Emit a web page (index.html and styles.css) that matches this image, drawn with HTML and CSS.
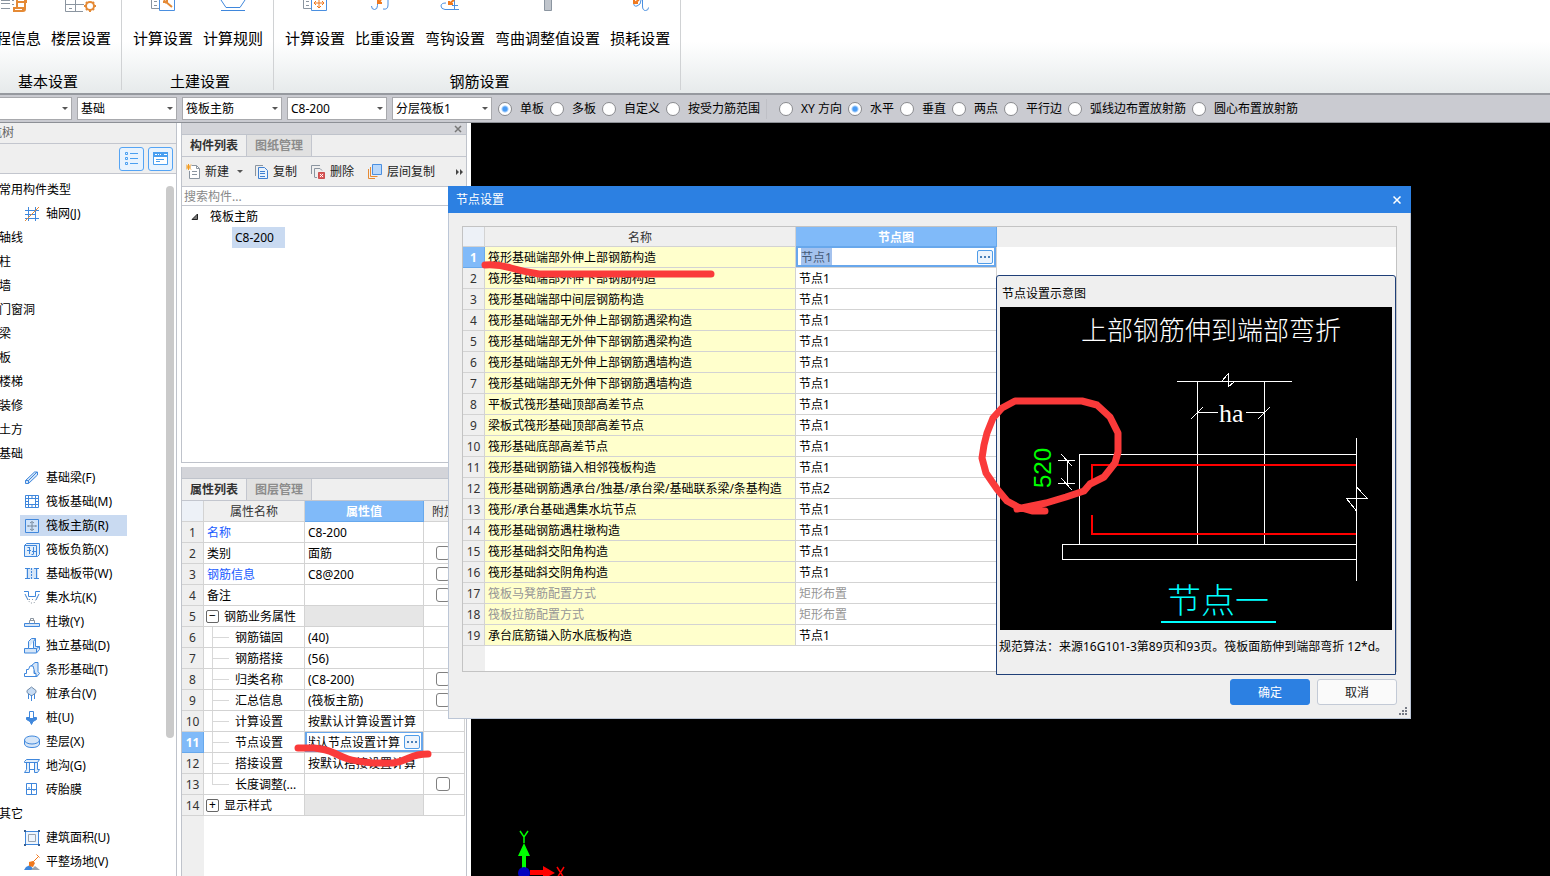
FILE: index.html
```html
<!DOCTYPE html>
<html lang="zh-CN">
<head>
<meta charset="utf-8">
<title>节点设置</title>
<link rel="stylesheet" href="styles.css">
</head>
<body>
<div class="app">
  <header class="ribbon">
    <section class="group group-basic">
      <div class="group-items">
        <button class="tool tool-first"><svg width="32" height="12" fill="none" stroke="#8b95a0"><path d="M4 .5h9M4 3.500h9M4 8.500h9M15 .5h2M15 4.500h2"/><path stroke="#e58a35" stroke-width="2" d="M20 0v7M28 0v9q0 2-2 2H17V8h9v3M20 2h9V0"/></svg><span>程信息</span></button>
        <button class="tool"><svg width="32" height="12" fill="none" stroke="#8b95a0"><path d="M.5 0v11.500H18M.5 4.500H19M10.500 0v11M4 8.500h3"/><circle cx="25" cy="6" r="4" stroke="#e58a35" stroke-width="2"/><path stroke="#e58a35" stroke-width="2" d="M19 6h2M29 6h2M25 10v2M21 2l1 1M28 9l1 1M21 10l1-1M28 3l1-1"/></svg><span>楼层设置</span></button>
      </div>
      <h2>基本设置</h2>
    </section>
    <section class="group">
      <div class="group-items">
        <button class="tool"><svg width="32" height="12" fill="none" stroke="#8b95a0"><path d="M4.500 0v8.500H12M7 1.500h3M7 5.500h3"/><path stroke="#4a8fe0" d="M12.500 0v10.500h15V0"/><path stroke="#e58a35" stroke-width="2" d="M17 0l2 3M19 2l6 5M16 2h4V0"/></svg><span>计算设置</span></button>
        <button class="tool"><svg width="32" height="12" fill="none" stroke="#3f87dc"><path d="M4 0l5 7.500h14L28 0M4 10.500h24"/></svg><span>计算规则</span></button>
      </div>
      <h2>土建设置</h2>
    </section>
    <section class="group">
      <div class="group-items">
        <button class="tool"><svg width="32" height="12" fill="none" stroke="#8b95a0"><path d="M4.500 0v8.500H12M7 1.500h3M7 5.500h3"/><path stroke="#4a8fe0" d="M12.500 0v10.500h15V0"/><path stroke="#f0791e" d="M20 0v8M15 3h10M18 6l2 2 2-2M17 1l-2 2 2 2M23 1l2 2-2 2"/></svg><span>计算设置</span></button>
        <button class="tool"><svg width="32" height="12" fill="none" stroke="#4a8fe0"><path d="M2.500 6q0 3.500 3 3.500t3-4V0M14 9q5 1 5-4V0"/><path stroke="#f0791e" stroke-width="2" d="M9 3l3-3M9 0v3h4"/></svg><span>比重设置</span></button>
        <button class="tool"><svg width="32" height="12" fill="none" stroke="#4a8fe0"><path d="M7 3q-5 0-5 3t4 3.500h14M15.500 0v9M13 5.500h6"/><path stroke="#f0791e" stroke-width="2" d="M10 4l5-4M10 1v3h4"/></svg><span>弯钩设置</span></button>
        <button class="tool"><svg width="32" height="12"><path fill="#c0c5cc" stroke="#8b95a0" d="M12.500-1h7v11.500h-7z"/></svg><span>弯曲调整值设置</span></button>
        <button class="tool"><svg width="32" height="12" fill="none" stroke="#4a8fe0"><path d="M10 2q-1 5 3 4t4-6M18.500 0v6q0 4.500 3 4.500t3-3"/><path stroke="#f0791e" stroke-width="2" d="M10 3l5-3M10 0v3h4"/></svg><span>损耗设置</span></button>
      </div>
      <h2>钢筋设置</h2>
    </section>
  </header>

  <div class="optionbar">
    <label class="combo combo-cut"><select aria-label="楼层"><option></option></select></label>
    <label class="combo"><select aria-label="构件大类"><option>基础</option></select></label>
    <label class="combo"><select aria-label="构件类型"><option>筏板主筋</option></select></label>
    <label class="combo"><select aria-label="构件名称"><option>C8-200</option></select></label>
    <label class="combo"><select aria-label="分层"><option>分层筏板1</option></select></label>
    <div class="radios">
      <label><input type="radio" name="range" checked>单板</label>
      <label><input type="radio" name="range">多板</label>
      <label><input type="radio" name="range">自定义</label>
      <label><input type="radio" name="range">按受力筋范围</label>
    </div>
    <div class="radios radios-dir">
      <label><input type="radio" name="dir">XY 方向</label>
      <label><input type="radio" name="dir" checked>水平</label>
      <label><input type="radio" name="dir">垂直</label>
      <label><input type="radio" name="dir">两点</label>
      <label><input type="radio" name="dir">平行边</label>
      <label><input type="radio" name="dir">弧线边布置放射筋</label>
      <label><input type="radio" name="dir">圆心布置放射筋</label>
    </div>
  </div>

  <main class="workspace">
    <aside class="nav">
      <h3 class="nav-title"><span>航树</span></h3>
      <div class="nav-tools">
        <button aria-label="列表"><svg width="16" height="16" fill="none" stroke="#4a9ff0"><path d="M1.500 1.500h2v2h-2zM1.500 6.500h2v2h-2zM1.500 11.500h2v2h-2zM6 2.500h8M6 7.500h8M6 12.500h8"/></svg></button>
        <button aria-label="面板"><svg width="16" height="16"><path fill="#fff" stroke="#4a9ff0" d="M.5 1.500h14v12H.5z"/><path fill="#4a9ff0" d="M0 1h15v5H0z"/><path stroke="#fff" d="M2 3.500h2M5 3.500h1M7 3.500h1M11 3.500h3"/><path stroke="#4a9ff0" d="M3 8.500h8M3 10.500h4"/></svg></button>
      </div>
      <div class="nav-scroll">
        <ul class="tree">
          <li>常用构件类型</li>
          <li class="leaf"><a href="#"><svg viewBox="0 0 16 16"><path d="M4.500 1v14M11.500 1v14M1 4.500h14M1 8.500h10M1 12.500h14"/><path stroke="#e58a35" d="M1 15L15 1"/></svg>轴网(J)</a></li>
          <li>轴线</li><li>柱</li><li>墙</li><li>门窗洞</li><li>梁</li><li>板</li><li>楼梯</li><li>装修</li><li>土方</li><li>基础</li>
          <li class="leaf"><a href="#"><svg viewBox="0 0 16 16"><path fill="#d6e6f8" d="M1.500 10.500l9-8.500h3v3l-9 8.500h-3zM1.500 10.500h3v3M4.500 10.500L13 2"/></svg>基础梁(F)</a></li>
          <li class="leaf"><a href="#"><svg viewBox="0 0 16 16"><path d="M1.500 1.500h13v12h-13zM4.500 1v13M11.500 1v13M1 4.500h14M1 10.500h14M8 1.500v3M8 10.500v3M1.500 7.500h3M11.500 7.500h3"/></svg>筏板基础(M)</a></li>
          <li class="leaf selected"><a href="#"><svg viewBox="0 0 16 16"><path fill="#cfe3fa" d="M1.500 1.500h13v13h-13z"/><path stroke="#77889b" d="M8 4v8M4 8h8M6 5l2-1.500L10 5M6 11l2 1.500 2-1.500M4 9V7M12 9V7"/></svg>筏板主筋(R)</a></li>
          <li class="leaf"><a href="#"><svg viewBox="0 0 16 16"><path fill="#e3effb" d="M.5 3.500l2-2h13v11l-2 2H.5zM.5 3.500h12v11"/><path d="M5.500 5v7M9.500 5v7M3 8.500h4M8 9.500h4M5.500 5.500h-2M9.500 12.500h-2"/></svg>筏板负筋(X)</a></li>
          <li class="leaf"><a href="#"><svg viewBox="0 0 16 16"><path fill="#d6e6f8" stroke="none" d="M2 2h12v11H2z"/><path d="M1 2.500h5M10 2.500h5M1 12.500h5M10 12.500h5M3.500 2.500v10M12.500 2.500v10"/><path stroke-dasharray="2 1" d="M7.500 2v11"/></svg>基础板带(W)</a></li>
          <li class="leaf"><a href="#"><svg viewBox="0 0 16 16"><path d="M0 1.500h4.500v5h7v-5H16M1 4l3 6M15 4l-3 6"/><path stroke="#8b95a0" stroke-dasharray="1 2" d="M2 6l4 7h4l4-7M5 9.500h6"/></svg>集水坑(K)</a></li>
          <li class="leaf"><a href="#"><svg viewBox="0 0 16 16"><path fill="#d6e6f8" d="M.5 9.500h15v3H.5z"/><path stroke="#8b95a0" d="M5.500 9.500v-3h5v3M6.500 6.500v-2h3v2"/></svg>柱墩(Y)</a></li>
          <li class="leaf"><a href="#"><svg viewBox="0 0 16 16"><path fill="#d6e6f8" d="M.5 10.500h4v-7l3-3h4v8h4v3l-3 3.500H.500zM4.500 10.500h5v-7l2-3M9.500 10.500h3v4M12.500 10.500l3-2"/></svg>独立基础(D)</a></li>
          <li class="leaf"><a href="#"><svg viewBox="0 0 16 16"><path fill="#d6e6f8" d="M7 4l4-3.500h3v9l1.500 2-3 3.500L9 6z"/><path fill="#fff" d="M.5 14.500v-3h2v-4h2L6 4h3l1 3.500v4h2v3z"/></svg>条形基础(T)</a></li>
          <li class="leaf"><a href="#"><svg viewBox="0 0 16 16"><path fill="#c7dcf4" stroke="#718ba8" d="M7.500 1L12 4.500v2L7.500 10 3 6.500v-2z"/><path d="M7.500 9v6M4.500 8v5M10.500 8v5"/></svg>桩承台(V)</a></li>
          <li class="leaf"><a href="#"><svg viewBox="0 0 16 16"><path fill="#fff" d="M5.500 1.500h4v7h-4z"/><path fill="#3f87dc" d="M2.500 7.500h3v2h4v-2h3v2L9 11.500l-1.500 3L6 11.500 2.500 9.500z"/></svg>桩(U)</a></li>
          <li class="leaf"><a href="#"><svg viewBox="0 0 16 16"><path fill="#d6e6f8" d="M.5 6v4q1 3.500 7.500 3.500t7.500-3.500V6"/><ellipse cx="8" cy="6" rx="7.500" ry="4" fill="#d6e6f8"/></svg>垫层(X)</a></li>
          <li class="leaf"><a href="#"><svg viewBox="0 0 16 16"><path fill="#e3effb" d="M.5 3.500l2-2h13l-2 3H.5zM2.500 4.500v7l-2 3h5v-10M10.500 4.500v10h3l2-3h-2v-7M5.500 11.500h5"/></svg>地沟(G)</a></li>
          <li class="leaf"><a href="#"><svg viewBox="0 0 16 16"><path d="M2.500 1.500h10v11h-10zM7.500 1.500v11M2.500 7.500h10M5 7V5M10 7v2"/></svg>砖胎膜</a></li>
          <li>其它</li>
          <li class="leaf"><a href="#"><svg viewBox="0 0 16 16"><path fill="#eef5fd" d="M1.500 1.500h13v13h-13z"/><path stroke="#99a3ae" d="M4.500 4.500h7v7h-7z"/><path fill="#385f91" stroke="none" d="M0 0h2v2H0zM14 0h2v2h-2zM0 14h2v2H0zM14 14h2v2h-2z"/></svg>建筑面积(U)</a></li>
          <li class="leaf"><a href="#"><svg viewBox="0 0 16 16"><path fill="#3f87dc" stroke="none" d="M0 16l2-3 4-2 4 5z"/><path fill="#99a3ae" stroke="none" d="M7 16l4-4 5 4z"/><path fill="#f0791e" stroke="none" d="M5 8l4-1 2 2-2 4-4-1z"/><path stroke="#f0791e" d="M9 8l5-5M12.500.500l3 3"/></svg>平整场地(V)</a></li>
        </ul>
        <div class="scrollbar"></div>
      </div>
    </aside>

    <div class="docks">
      <section class="dock dock-list">
        <div class="dock-bar"><button aria-label="关闭"><svg width="8" height="8" stroke="#777" stroke-width="1.500"><path d="M1 1l6 6M7 1L1 7"/></svg></button></div>
        <div class="tabs"><button class="active">构件列表</button><button>图纸管理</button></div>
        <div class="dock-tools">
          <button><svg width="15" height="16" fill="none" stroke="#8b95a0"><path fill="#fff" d="M5.500 1.500h5l3 3v10h-10V7"/><path d="M10.500 1.500v3h3M6 7.500h5M6 10.500h5"/><path stroke="#f29a1c" d="M0 .5l5 5M5 .5l-5 5M2.500 0v6M0 3h5"/></svg>新建<i class="caret"></i></button>
          <button class="b-copy"><svg width="14" height="16" fill="none" stroke="#8b95a0"><path d="M.5 12V1.500H8"/><path stroke="#3f7fd0" fill="#e8f2fd" d="M3.500 3.500h6l3 3v8h-9zM5 7.500h5M5 9.500h5M5 12.500h5"/></svg>复制</button>
          <button class="b-delete"><svg width="15" height="16" fill="none" stroke="#8b95a0"><path d="M.5 10V1.500H9M3.500 13V4.500H9l2 2M3.500 13.500H6"/><path fill="#dc5a5a" stroke="#c94f4f" d="M7.500 8.500h6v6h-6z"/><path stroke="#fff" d="M9 10l3 3M12 10l-3 3"/></svg>删除</button>
          <button class="b-floor"><svg width="15" height="16" fill="none" stroke="#e58a35"><path d="M.5 5v9.500H7M2.500 3v9.500h7" /><path fill="#b9d8fb" stroke="#4a8fe0" d="M4.500.500h9v10h-9z"/></svg>层间复制</button>
          <button class="b-more" aria-label="更多"><svg width="8" height="8" fill="#444"><path d="M0 1l3 3-3 3zM4 1l3 3-3 3z"/></svg></button>
        </div>
        <input class="search" type="text" placeholder="搜索构件..." aria-label="搜索构件">
        <div class="parts">
          <div class="part-root"><svg width="8" height="8"><path fill="#777" stroke="#222" d="M6.500 1v5.500H1z"/></svg>筏板主筋</div>
          <div class="part-item">C8-200</div>
        </div>
      </section>

      <section class="dock dock-props">
        <div class="dock-bar"></div>
        <div class="tabs"><button class="active">属性列表</button><button>图层管理</button></div>
        <div class="props">
        <table class="grid">
          <colgroup><col class="c-num"><col class="c-name"><col class="c-value"><col></colgroup>
          <thead><tr><th class="corner"></th><th>属性名称</th><th class="hot">属性值</th><th class="extra">附加</th></tr></thead>
          <tbody>
            <tr><th>1</th><td class="link">名称</td><td>C8-200</td><td></td></tr>
            <tr><th>2</th><td>类别</td><td>面筋</td><td class="check"><input type="checkbox" aria-label="类别附加"></td></tr>
            <tr><th>3</th><td class="link">钢筋信息</td><td>C8@200</td><td class="check"><input type="checkbox" aria-label="钢筋信息附加"></td></tr>
            <tr><th>4</th><td>备注</td><td></td><td class="check"><input type="checkbox" aria-label="备注附加"></td></tr>
            <tr><th>5</th><td><button class="fold">−</button>钢筋业务属性</td><td class="dim"></td><td></td></tr>
            <tr><th>6</th><td class="sub">钢筋锚固</td><td>(40)</td><td></td></tr>
            <tr><th>7</th><td class="sub">钢筋搭接</td><td>(56)</td><td></td></tr>
            <tr><th>8</th><td class="sub">归类名称</td><td>(C8-200)</td><td class="check"><input type="checkbox" aria-label="归类名称附加"></td></tr>
            <tr><th>9</th><td class="sub">汇总信息</td><td>(筏板主筋)</td><td class="check"><input type="checkbox" aria-label="汇总信息附加"></td></tr>
            <tr><th>10</th><td class="sub">计算设置</td><td>按默认计算设置计算</td><td></td></tr>
            <tr><th class="hot">11</th><td class="sub">节点设置</td><td class="edit"><div class="editor"><input class="scrolled" type="text" value="按默认节点设置计算" aria-label="节点设置"><button class="dots" aria-label="选择"><i></i></button></div></td><td></td></tr>
            <tr><th>12</th><td class="sub">搭接设置</td><td>按默认搭接设置计算</td><td></td></tr>
            <tr><th>13</th><td class="sub last">长度调整(...</td><td></td><td class="check"><input type="checkbox" aria-label="长度调整附加"></td></tr>
            <tr><th>14</th><td><button class="fold">+</button>显示样式</td><td class="dim"></td><td></td></tr>
          </tbody>
        </table>
        </div>
      </section>
    </div>

    <section class="canvas">
      <svg class="axes" width="80" height="50"><path fill="#0f0" d="M28 45V29h-4l6-13 6 13h-4v16z"/><path fill="red" d="M36 43h13v-4l12 7-12 6v-4H36z"/><circle cx="30" cy="46" r="6" fill="#0000c0"/><path fill="none" stroke="#0f0" stroke-width="1.500" d="M26 4l4 6 4-6M30 10v6"/><path fill="none" stroke="red" stroke-width="1.500" d="M63 40l7 11M70 40l-7 11"/></svg>
    </section>
  </main>
</div>

<div class="dialog" role="dialog" aria-labelledby="dialog-title">
  <div class="dialog-head"><h1 id="dialog-title">节点设置</h1><button aria-label="关闭"><svg width="8" height="8" stroke="#fff" stroke-width="1.500"><path d="M.5.5l7 7M7.500.5l-7 7"/></svg></button></div>
  <div class="dialog-body">
    <div class="nodes">
      <table class="grid">
        <colgroup><col class="c-num"><col class="c-node"><col class="c-pic"><col></colgroup>
        <thead><tr><th class="corner"></th><th>名称</th><th class="hot">节点图</th><th class="rest"></th></tr></thead>
        <tbody>
          <tr><th class="hot">1</th><td>筏形基础端部外伸上部钢筋构造</td><td class="edit"><div class="editor"><input class="picked" type="text" value="节点1" aria-label="节点图"><button class="dots" aria-label="选择"><i></i></button></div></td></tr>
          <tr><th>2</th><td>筏形基础端部外伸下部钢筋构造</td><td>节点1</td></tr>
          <tr><th>3</th><td>筏形基础端部中间层钢筋构造</td><td>节点1</td></tr>
          <tr><th>4</th><td>筏形基础端部无外伸上部钢筋遇梁构造</td><td>节点1</td></tr>
          <tr><th>5</th><td>筏形基础端部无外伸下部钢筋遇梁构造</td><td>节点1</td></tr>
          <tr><th>6</th><td>筏形基础端部无外伸上部钢筋遇墙构造</td><td>节点1</td></tr>
          <tr><th>7</th><td>筏形基础端部无外伸下部钢筋遇墙构造</td><td>节点1</td></tr>
          <tr><th>8</th><td>平板式筏形基础顶部高差节点</td><td>节点1</td></tr>
          <tr><th>9</th><td>梁板式筏形基础顶部高差节点</td><td>节点1</td></tr>
          <tr><th>10</th><td>筏形基础底部高差节点</td><td>节点1</td></tr>
          <tr><th>11</th><td>筏形基础钢筋锚入相邻筏板构造</td><td>节点1</td></tr>
          <tr><th>12</th><td>筏形基础钢筋遇承台/独基/承台梁/基础联系梁/条基构造</td><td>节点2</td></tr>
          <tr><th>13</th><td>筏形/承台基础遇集水坑节点</td><td>节点1</td></tr>
          <tr><th>14</th><td>筏形基础钢筋遇柱墩构造</td><td>节点1</td></tr>
          <tr><th>15</th><td>筏形基础斜交阳角构造</td><td>节点1</td></tr>
          <tr><th>16</th><td>筏形基础斜交阴角构造</td><td>节点1</td></tr>
          <tr class="off"><th>17</th><td>筏板马凳筋配置方式</td><td>矩形布置</td></tr>
          <tr class="off"><th>18</th><td>筏板拉筋配置方式</td><td>矩形布置</td></tr>
          <tr><th>19</th><td>承台底筋锚入防水底板构造</td><td>节点1</td></tr>
        </tbody>
      </table>
      <div class="preview">
        <h2>节点设置示意图</h2>
        <svg class="drawing" viewBox="0 0 392 323">
          <rect width="392" height="323"/>
          <g fill="none" stroke="#fff" shape-rendering="crispEdges">
            <path d="M177 74.500h115M197.500 74v164M264.500 74v164M198 105.500h20M246 105.500h18M356.500 147.500H79.500v90M356.500 237.500h-294v15h294M356.500 131v143M58 153.500h17M58 176.500h17M67.500 154v23"/>
            <path d="M222 74l6-7v13l6-5M191 112l12-12M258 112l12-12M356.500 180l11 11.500h-21l10 12.500M61 147l11 12M61 171l11 12"/>
          </g>
          <path fill="none" stroke="red" stroke-width="2" d="M356 158H92v18M92 208v19h264"/>
          <path stroke="#0ff" stroke-width="2" d="M161 315h115"/>
          <text class="cad-title" x="81" y="33">上部钢筋伸到端部弯折</text>
          <text class="cad-ha" x="219" y="115">ha</text>
          <text class="cad-dim" transform="translate(51 181) rotate(-90)">520</text>
          <text class="cad-name" x="167" y="306">节点一</text>
        </svg>
        <p>规范算法：来源16G101-3第89页和93页。筏板面筋伸到端部弯折 12*d。</p>
      </div>
    </div>
    <div class="actions"><button class="primary">确定</button><button>取消</button></div>
  </div>
  <svg class="grip" width="9" height="9" fill="#777b86"><path d="M6 0h2v2H6zM3 3h2v2H3zM6 3h2v2H6zM0 6h2v2H0zM3 6h2v2H3zM6 6h2v2H6z"/></svg>
</div>

<svg class="marks" width="1550" height="876" aria-hidden="true">
  <path d="M485 265q12-1 26 3t28 6h172"/>
  <path d="M298 748h16q12 1 20 5t14 6 25 4h20q8-1 16-5t19-4"/>
  <path d="M1045 511h-13l-14-4-11-6-10-12-11-16-4-15 2-13 3-12 6-15 9-10 13-7h67l15 4 13 12 8 16v19l-3 11-11 14-14 7-6 7-18 6-20 6-29 6"/>
</svg>
</body>
</html>
```
FILE: styles.css
```css
* { box-sizing: border-box; }

body {
  margin: 0;
  font: 12px/20px "Noto Sans", "Noto Sans CJK SC", sans-serif;
  color: #000;
  background: #fff;
  overflow: hidden;
}

h1, h2, h3, p, ul { margin: 0; padding: 0; font-weight: 400; font-size: inherit; }
button, input, select { font: inherit; color: inherit; margin: 0; padding: 0; border: 0; background: none; }
svg { flex: none; display: block; }

.app { height: 100vh; display: flex; flex-direction: column; }

/* ribbon */
.ribbon {
  flex: none;
  display: flex;
  height: 95px;
  padding-bottom: 3px;
  background: linear-gradient(#fff 45%, #e6eaeb);
  border-bottom: 2px solid #96999f;
  font-size: 15px;
}
.group {
  display: flex;
  flex-direction: column;
  justify-content: space-between;
  padding: 0 10px;
  border-right: 1px solid #d0d2d4;
  margin-right: 1px;
}
.group h2 { padding-left: 4px; text-align: center; line-height: 18px; }
.group-items { display: flex; gap: 10px; }
.group-basic { padding-left: 0; }
.group-basic h2 { padding: 0; margin-right: 15px; }
.tool { display: flex; flex-direction: column; align-items: center; gap: 16px; white-space: nowrap; line-height: 20px; }
.tool-first { margin-left: -4px; }
.tool-first svg { margin-right: 12px; }

/* option bar */
.optionbar {
  flex: none;
  display: flex;
  align-items: center;
  gap: 5px;
  height: 28px;
  background: #cacbd1;
  border-bottom: 1px solid #8d9096;
}
.combo { position: relative; width: 100px; }
.combo-cut { width: 72px; }
.combo select {
  display: block;
  width: 100%;
  height: 23px;
  padding: 0 3px;
  appearance: none;
  background: #fff;
  border: 1px solid #a8a9ad;
}
.combo-cut select { border-left: 0; }
.combo::after, .caret {
  content: "";
  border: 3px solid transparent;
  border-top-color: #555;
  border-bottom: 0;
}
.combo::after { position: absolute; right: 4px; top: 10px; pointer-events: none; }
.radios { display: flex; gap: 6px; margin-left: 1px; white-space: nowrap; }
.radios label { display: flex; align-items: center; gap: 8px; }
.radios-dir { padding-left: 12px; border-left: 1px solid #bfc0c6; }
.radios input {
  appearance: none;
  width: 14px;
  height: 14px;
  border: 1px solid #8a8b8f;
  border-radius: 50%;
  background: #fff;
}
.radios input:checked { background: radial-gradient(circle, #4a9cf5 2px, #fff 4px); }

/* workspace */
.workspace { flex: 1; min-height: 0; display: flex; }
.nav {
  flex: none;
  width: 177px;
  display: flex;
  flex-direction: column;
  border-right: 1px solid #bfc3cb;
}
.nav-title {
  height: 21px;
  background: #efefef;
  border-bottom: 1px solid #c3c6ce;
  color: #666;
  overflow: hidden;
}
.nav-title span { margin-left: -10px; }
.nav-tools {
  display: flex;
  justify-content: flex-end;
  gap: 4px;
  padding: 3px 3px 2px;
  background: #efefef;
  border-bottom: 1px solid #c3c6ce;
}
.nav-tools button {
  display: grid;
  place-items: center;
  width: 25px;
  height: 24px;
  background: #e8f3fe;
  border: 1px solid #55a4f4;
  border-radius: 3px;
}
.nav-scroll { flex: 1; min-height: 0; display: flex; justify-content: space-between; padding: 4px 2px 0 0; }
.tree { list-style: none; margin-left: -1px; line-height: 24px; }
.tree li { height: 24px; white-space: nowrap; }
.leaf { padding: 1px 0 2px 21px; }
.leaf a {
  display: flex;
  align-items: center;
  gap: 6px;
  width: 107px;
  height: 21px;
  padding-left: 4px;
  line-height: 20px;
  color: inherit;
  text-decoration: none;
}
.leaf svg { width: 16px; height: 16px; fill: none; stroke: #3f87dc; }
.selected a { background: #c9daf1; }
.scrollbar { width: 8px; height: 552px; margin-top: 8px; border-radius: 4px; background: #cacaca; }

.docks { flex: none; width: 294px; padding: 0 4px; display: flex; flex-direction: column; gap: 4px; }
.dock { display: flex; flex-direction: column; border: 1px solid #bfc3cb; border-top: 0; }
.dock-list { height: 340px; }
.dock-props { flex: 1; min-height: 0; border-bottom: 0; }
.dock-bar {
  flex: none;
  height: 12px;
  display: flex;
  justify-content: flex-end;
  align-items: center;
  padding-right: 4px;
  background: #d3d4d9;
  border-bottom: 1px solid #bfc3cb;
}
.tabs { flex: none; display: flex; height: 22px; background: #efefef; border-bottom: 1px solid #c3c6ce; }
.tabs button {
  width: 65px;
  font-weight: 700;
  color: #8c8c8c;
  background: #e1e1e1;
  border-right: 1px solid #c3c6ce;
}
.tabs .active { color: #333; background: #efefef; }
.dock-tools {
  flex: none;
  display: flex;
  align-items: center;
  height: 30px;
  padding: 0 2px 0 4px;
  background: #efefef;
  border-bottom: 1px solid #c3c6ce;
  color: #222;
}
.dock-tools button { display: flex; align-items: center; gap: 4px; white-space: nowrap; }
.caret { margin-left: 4px; }
.b-copy { margin-left: 12px; }
.b-delete { margin-left: 14px; }
.b-floor { margin-left: 14px; }
.dock-tools .b-more { margin-left: auto; }
.search { flex: none; height: 19px; padding: 2px 2px 0; border-bottom: 1px solid #c3c6ce; width: 100%; }
.search::placeholder { color: #888; opacity: 1; }
.parts { padding: 1px 9px; }
.part-root { display: flex; align-items: center; gap: 11px; height: 20px; }
.part-item { width: 53px; height: 21px; margin-left: 41px; padding-left: 3px; line-height: 22px; background: #c9daf1; }

/* grids */
.grid { width: 100%; table-layout: fixed; border-collapse: separate; border-spacing: 0; }
.c-num { width: 22px; }
.c-name { width: 101px; }
.c-value { width: 119px; }
.c-node { width: 311px; }
.c-pic { width: 201px; }
.grid th, .grid td {
  height: 21px;
  padding: 2px 0 0 3px;
  line-height: 18px;
  text-align: left;
  white-space: nowrap;
  overflow: hidden;
  font-weight: 400;
  border-right: 1px solid #d3d3d3;
  border-bottom: 1px solid #d3d3d3;
}
.grid th { padding: 2px 0 0; text-align: center; color: #333; background: #efefef; }
.grid .corner { background: #edf1f7; }
.grid .hot { color: #fff; font-weight: 700; background: #80baf9; border-color: #67a8ec; }
.grid .link { color: #1a5cff; }
.grid .dim { background: #e6e6e6; }
.grid .extra { text-align: left; padding-left: 8px; }

.props { flex: 1; min-height: 0; padding-right: 1px; background: linear-gradient(to right, #efefef 22px, #fff 22px); }
.grid .check { padding: 0 0 0 12px; }
.check input {
  appearance: none;
  display: block;
  width: 14px;
  height: 14px;
  background: #fff;
  border: 1px solid #808080;
  border-radius: 3px;
}
.fold {
  width: 13px;
  height: 13px;
  margin: 0 5px 0 -1px;
  line-height: 10px;
  vertical-align: 1px;
  background: #fff;
  border: 1px solid #666;
  border-radius: 2px;
}
.grid .sub {
  padding-left: 31px;
  background: linear-gradient(#d8d8d8, #d8d8d8) 8px 10px / 17px 1px no-repeat, linear-gradient(#d8d8d8, #d8d8d8) 8px 0 / 1px 100% no-repeat;
}
.grid .last { background-size: 17px 1px, 1px 10px; }
.grid .edit { padding: 0; }
.editor {
  display: flex;
  align-items: center;
  justify-content: space-between;
  height: 20px;
  padding: 0 1px 0 2px;
  background: #fff;
  border: 2px solid #68a7ec;
  border-top-width: 1px;
}
.editor input { height: 17px; padding-top: 2px; }
.editor .scrolled { flex: 1; min-width: 0; text-indent: -17px; overflow: hidden; }
.editor .picked { width: 31px; margin-left: 1px; background: #a4c2ee; color: #455a78; }
.dots {
  flex: none;
  display: grid;
  place-items: center;
  width: 16px;
  height: 14px;
  background: #edf4fc;
  border: 1px solid #4f9ce8;
  border-radius: 2px;
}
.dots i { width: 10px; height: 2px; background: repeating-linear-gradient(to right, #4a80b8 0 2px, transparent 2px 4px); }

/* canvas */
.canvas { flex: 1; position: relative; background: #000; }
.axes { position: absolute; left: 23px; bottom: -1px; }

/* dialog */
.dialog {
  position: absolute;
  left: 448px;
  right: 139px;
  top: 186px;
  background: #efefef;
  border: 1px solid #bcc6d6;
  border-top: 0;
}
.dialog-head {
  display: flex;
  justify-content: space-between;
  align-items: center;
  height: 27px;
  margin: 0 -1px;
  padding: 0 10px 0 8px;
  background: #2c80e2;
  color: #fff;
}
.dialog-body { padding: 13px; }
.nodes {
  position: relative;
  height: 446px;
  border: 1px solid #c3c3c3;
  background: linear-gradient(to right, #efefef 22px, #fff 22px);
}
.nodes thead th { height: 20px; line-height: 17px; }
.nodes .rest { border-color: transparent; }
.nodes tbody td:nth-child(2) { background: #ffffcc; }
.nodes .off td { color: #969696; }
.preview {
  position: absolute;
  right: 0;
  top: 48px;
  width: 400px;
  height: 400px;
  padding: 8px 3px;
  background: #efefef;
  border: 1px solid #1f3f78;
  border-radius: 3px 3px 0 0;
}
.preview h2 { padding-left: 2px; margin-bottom: 3px; }
.drawing { width: 392px; }
.preview p { margin: 7px 0 0 -1px; white-space: nowrap; }
.drawing text { font-family: "Noto Sans CJK SC", sans-serif; font-weight: 300; fill: #fff; }
.drawing .cad-title { font-size: 26px; }
.drawing .cad-ha { font-family: "Liberation Serif", serif; font-size: 26px; }
.drawing .cad-dim { font-family: "Liberation Sans", sans-serif; font-size: 24px; fill: #0f0; }
.drawing .cad-name { font-size: 34px; fill: #0ff; }
.actions { display: flex; justify-content: flex-end; gap: 7px; margin-top: 7px; }
.actions button {
  width: 80px;
  height: 26px;
  padding-top: 2px;
  background: #fafafa;
  border: 1px solid #c3cad6;
  border-radius: 3px;
  color: #222;
}
.actions .primary { background: #2c80e2; border-color: #2c80e2; color: #fff; }
.grip { position: absolute; right: 2px; bottom: 2px; }

/* pen marks */
.marks {
  position: absolute;
  left: 0;
  top: 0;
  pointer-events: none;
  fill: none;
  stroke: #fa3a3a;
  stroke-width: 7px;
  stroke-linecap: round;
  stroke-linejoin: round;
}
```
